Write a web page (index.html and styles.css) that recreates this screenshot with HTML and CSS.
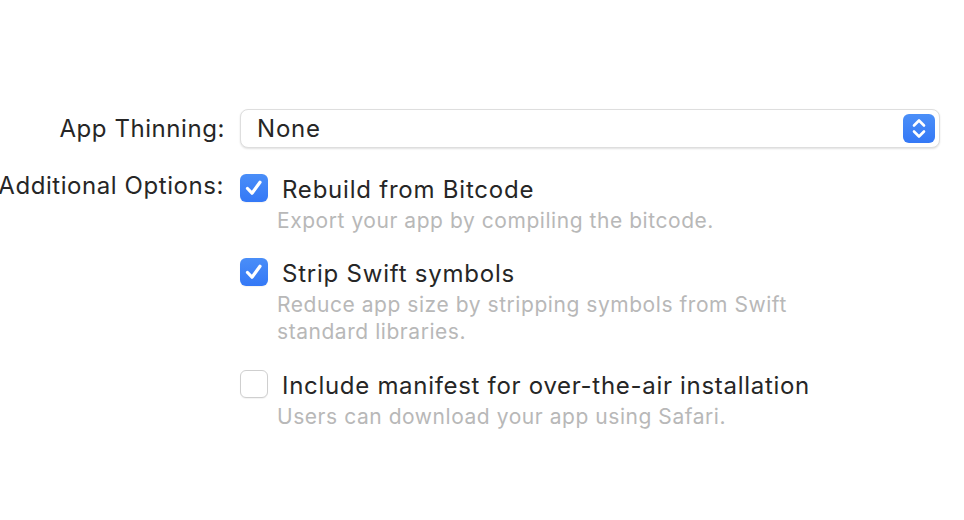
FILE: index.html
```html
<!DOCTYPE html>
<html>
<head>
<meta charset="utf-8">
<link rel="stylesheet" href="styles.css">
</head>
<body>
<div class="form">
  <div class="label label-popup">App Thinning:</div>
  <div class="popup">
    <span class="popup-value">None</span>
    <span class="stepper">
      <svg width="32" height="29" viewBox="0 0 32 29">
        <path d="M11 11.5 L16 6.5 L21 11.5" fill="none" stroke="#fff" stroke-width="2.6" stroke-linecap="round" stroke-linejoin="round"/>
        <path d="M11 17.5 L16 22.5 L21 17.5" fill="none" stroke="#fff" stroke-width="2.6" stroke-linecap="round" stroke-linejoin="round"/>
      </svg>
    </span>
  </div>

  <div class="label label-options">Additional Options:</div>
  <div class="options">
    <div class="option">
      <span class="check on">
        <svg width="28" height="28" viewBox="0 0 28 28"><path d="M7.5 14.5 L12 19.2 L20 8.3" fill="none" stroke="#fff" stroke-width="3.2" stroke-linecap="round" stroke-linejoin="round"/></svg>
      </span>
      <div class="option-text">
        <div class="title">Rebuild from Bitcode</div>
        <div class="desc">Export your app by compiling the bitcode.</div>
      </div>
    </div>
    <div class="option">
      <span class="check on">
        <svg width="28" height="28" viewBox="0 0 28 28"><path d="M7.5 14.5 L12 19.2 L20 8.3" fill="none" stroke="#fff" stroke-width="3.2" stroke-linecap="round" stroke-linejoin="round"/></svg>
      </span>
      <div class="option-text">
        <div class="title">Strip Swift symbols</div>
        <div class="desc">Reduce app size by stripping symbols from Swift<br>standard libraries.</div>
      </div>
    </div>
    <div class="option option-last">
      <span class="check"></span>
      <div class="option-text">
        <div class="title title-long">Include manifest for over-the-air installation</div>
        <div class="desc">Users can download your app using Safari.</div>
      </div>
    </div>
  </div>
</div>
</body>
</html>
```

FILE: styles.css
```css
html, body {
  margin: 0;
  padding: 0;
  background: #ffffff;
}
body {
  font-family: Inter, "Liberation Sans", sans-serif;
  color: #262626;
  width: 964px;
  height: 520px;
  overflow: hidden;
}
.form {
  display: grid;
  grid-template-columns: 225px 700px;
  column-gap: 15px;
  row-gap: 26px;
  padding-top: 109px;
}
.label {
  display: flex;
  justify-content: flex-end;
  white-space: nowrap;
  font-size: 24px;
  letter-spacing: 0.57px;
  color: #262626;
}
.label-popup {
  align-items: center;
  height: 39px;
}
.label-options {
  margin-top: -3px;
  margin-right: 1px;
}
.popup {
  height: 39px;
  box-sizing: border-box;
  border: 1px solid #dedede;
  border-radius: 8px;
  box-shadow: 0 1px 2px rgba(0,0,0,0.12);
  display: flex;
  align-items: center;
  justify-content: space-between;
  padding-left: 16px;
  padding-right: 4px;
  background: #fff;
}
.popup-value {
  font-size: 24px;
  letter-spacing: 0.8px;
  color: #262626;
  margin-top: -1px;
}
.stepper {
  width: 32px;
  height: 29px;
  border-radius: 6px;
  background: linear-gradient(#4b8ff8, #3478f6);
  display: flex;
}
.options {
  display: flex;
  flex-direction: column;
  gap: 24px;
}
.option {
  display: flex;
  align-items: flex-start;
  gap: 14px;
}
.option-last {
  margin-top: 1px;
}
.check {
  flex: none;
  width: 28px;
  height: 28px;
  box-sizing: border-box;
  border-radius: 6px;
  border: 1px solid #cfcfcf;
  background: #fff;
  box-shadow: 0 1px 1px rgba(0,0,0,0.05);
  display: flex;
}
.check.on {
  border: none;
  background: linear-gradient(#4a8ef8, #3478f6);
}
.option-text {
  display: flex;
  flex-direction: column;
}
.title {
  font-size: 24px;
  letter-spacing: 0.78px;
  line-height: 30px;
  margin-top: 1px;
  white-space: nowrap;
}
.title-long {
  letter-spacing: 0.7px;
}
.desc {
  font-size: 21px;
  letter-spacing: 0.55px;
  line-height: 27px;
  color: #b8b8b8;
  margin-top: 2px;
  margin-left: -5px;
  white-space: nowrap;
}
```
